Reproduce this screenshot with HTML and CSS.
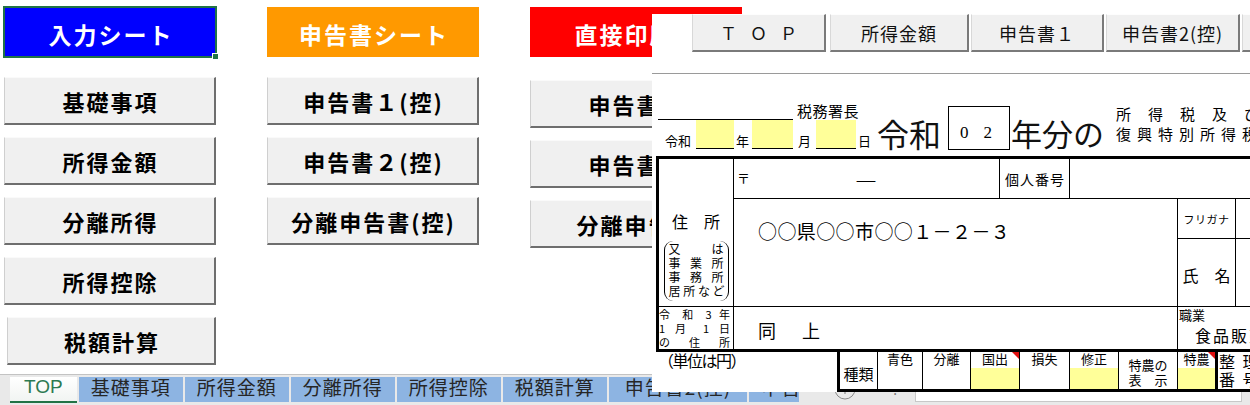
FILE: index.html
```html
<!DOCTYPE html>
<html lang="ja">
<head>
<meta charset="utf-8">
<title>TOP</title>
<link rel="stylesheet" href="styles.css">
</head>
<body>
<div class="sheet">
  <div class="col">
    <div class="hdr hdr-blue">入力シート<span class="handle"></span></div>
    <div class="btn">基礎事項</div>
    <div class="btn">所得金額</div>
    <div class="btn">分離所得</div>
    <div class="btn">所得控除</div>
    <div class="btn btn-shift">税額計算</div>
  </div>
  <div class="col">
    <div class="hdr hdr-orange">申告書シート</div>
    <div class="btn">申告書１(控)</div>
    <div class="btn">申告書２(控)</div>
    <div class="btn">分離申告書(控)</div>
  </div>
  <div class="col col3">
    <div class="hdr hdr-red">直接印刷用</div>
    <div class="btn">申告書１</div>
    <div class="btn">申告書２</div>
    <div class="btn">分離申告書</div>
  </div>
</div>

<div class="tabbar">
  <span class="tab tab-active">TOP</span>
  <span class="tab">基礎事項</span>
  <span class="tab">所得金額</span>
  <span class="tab">分離所得</span>
  <span class="tab">所得控除</span>
  <span class="tab">税額計算</span>
  <span class="tab tab-wide">申告書2(控)</span>
  <span class="tab tab-cut">申告書１</span>
  <span class="dots">⋯</span>
  <span class="addbtn"><svg width="22" height="22" viewBox="0 0 22 22"><circle cx="11" cy="11" r="10" fill="none" stroke="#8a8a8a" stroke-width="1"/><path d="M11 6v10M6 11h10" stroke="#8a8a8a" stroke-width="1.2"/></svg></span>
  <span class="sq"></span>
  <span class="vdots">⁝</span>
  <span class="hscroll"></span>
</div>

<div class="popup">
  <div class="pbtns">
    <div class="pbtn w-top"><span class="toptxt">ＴＯＰ</span></div>
    <div class="pbtn w-a">所得金額</div>
    <div class="pbtn w-b">申告書１</div>
    <div class="pbtn w-c">申告書2(控)</div>
    <div class="pbtn w-d"></div>
  </div>
  <div class="pline"></div>

  <div class="phead">
    <div class="dateblk">
      <div class="rowA"><span class="uline"></span><span class="zeimu">税務署長</span></div>
      <div class="rowB">
        <span class="dl dl-reiwa">令和</span>
        <span class="ybox yb1"></span>
        <span class="dl dl-nen">年</span>
        <span class="ybox yb2"></span>
        <span class="dl dl-tsuki">月</span>
        <span class="ybox yb3"></span>
        <span class="dl dl-hi">日</span>
      </div>
    </div>
    <div class="ttl ttl-reiwa">令和</div>
    <div class="yearbox">02</div>
    <div class="ttl ttl-nen">年分の</div>
    <div class="ttl2">
      <div class="t2a">所得税及び</div>
      <div class="t2b">復興特別所得税</div>
    </div>
  </div>

  <div class="ptable">
    <div class="cell lab1">
      <div class="jusho">住　所</div>
      <div class="brk">
        <div class="bl">又 は</div>
        <div class="bl">事 業 所</div>
        <div class="bl">事 務 所</div>
        <div class="bl">居 所 な ど</div>
      </div>
    </div>
    <div class="cell zip"><span class="yuubin">〒</span><span class="dash">―</span></div>
    <div class="cell kojin">個人番号</div>
    <div class="cell r1rest"></div>
    <div class="cell addr">○○県○○市○○１－２－３</div>
    <div class="cell furi">フリガナ</div>
    <div class="cell furi2"></div>
    <div class="cell shimei">氏　名</div>
    <div class="cell shimei2"></div>
    <div class="cell lab3">
      <div class="jl">令 和 3 年</div>
      <div class="jl">1 月 1 日</div>
      <div class="jl">の 住 所</div>
    </div>
    <div class="cell doujou">同<span class="gap"></span>上</div>
    <div class="cell shoku">
      <div class="sk1">職業</div>
      <div class="sk2">食品販売業</div>
    </div>
  </div>

  <div class="pbottom">
    <div class="unit">（単位は円）</div>
    <div class="kbox">
      <div class="kc k-shurui">種類</div>
      <div class="kc">青色</div>
      <div class="kc">分離</div>
      <div class="kc kc-y flag">国出</div>
      <div class="kc">損失</div>
      <div class="kc kc-y">修正</div>
      <div class="kc k-tokuno"><div>特農の</div><div>表　示</div></div>
      <div class="kc kc-y flag">特農</div>
      <div class="kc k-seiri"><div>整 理</div><div>番 号</div></div>
    </div>
  </div>
</div>
</body>
</html>
```

FILE: styles.css
```css
html, body {
  margin: 0;
  padding: 0;
}
body {
  width: 1250px;
  height: 405px;
  overflow: hidden;
  position: relative;
  background: #fff;
  font-family: "Noto Sans CJK JP", "Noto Sans", sans-serif;
  color: #000;
}

/* ---------- sheet with navigation buttons ---------- */
.sheet {
  height: 374px;
  box-sizing: border-box;
  padding: 7px 0 0 4px;
  display: flex;
  gap: 51px;
}
.col {
  width: 212px;
  display: flex;
  flex-direction: column;
  gap: 12px;
}
.hdr {
  height: 50px;
  margin-bottom: 8px;
  box-sizing: border-box;
  padding: 4px 0 0 2px;
  display: flex;
  align-items: center;
  justify-content: center;
  color: #fff;
  font-weight: 700;
  font-size: 23px;
  letter-spacing: 2px;
  position: relative;
}
.col3 .hdr {
  margin-bottom: 11px;
}
.hdr-blue {
  background: #0000ff;
  outline: 2px solid #217346;
  outline-offset: -1px;
}
.hdr-orange {
  background: #ff9900;
}
.hdr-red {
  background: #ff0000;
}
.handle {
  position: absolute;
  right: -3px;
  bottom: -3px;
  width: 5px;
  height: 5px;
  background: #217346;
  border: 1px solid #fff;
}
.btn {
  height: 48px;
  box-sizing: border-box;
  background: #f0f0f0;
  border-style: solid;
  border-width: 1px 2px 2px 1px;
  border-color: #fafafa #6e6e6e #6e6e6e #cfcfcf;
  display: flex;
  align-items: center;
  justify-content: center;
  padding-left: 2px;
  font-weight: 700;
  font-size: 22px;
  letter-spacing: 2px;
  white-space: nowrap;
}
.btn-shift {
  margin-left: 3px;
  width: 209px;
}

/* ---------- sheet tab bar ---------- */
.tabbar {
  height: 31px;
  box-sizing: border-box;
  border-top: 1px solid #c3c3c3;
  background: #e9e9e9;
  display: flex;
  align-items: flex-start;
  padding: 2px 0 0 10px;
}
.tab {
  height: 25px;
  box-sizing: border-box;
  line-height: 20px;
  padding: 0 12px;
  margin-right: 2px;
  background: #8db4e2;
  font-size: 19px;
  letter-spacing: 1px;
  color: #262626;
  white-space: nowrap;
  flex: none;
}
.tab-active {
  height: 26px;
  background: linear-gradient(#ffffff, #f1f4f2);
  border-bottom: 2px solid #217346;
  color: #2d7a52;
  font-family: "Liberation Sans", Arial, sans-serif;
  padding: 0 14px;
  letter-spacing: 0;
}
.tab-wide {
  padding: 0 16px;
}
.tab-cut {
  width: 50px;
  overflow: hidden;
  padding: 0 0 0 12px;
}
.dots {
  flex: none;
  width: 16px;
  color: #217346;
  font-size: 16px;
  line-height: 22px;
}
.addbtn {
  flex: none;
  margin-left: 17px;
  width: 22px;
  height: 22px;
  margin-top: 1px;
}
.addbtn svg {
  display: block;
}
.sq {
  flex: none;
  width: 3px;
  height: 3px;
  background: #9a9a9a;
  margin: 11px 0 0 19px;
}
.vdots {
  flex: none;
  margin-left: 15px;
  width: 8px;
  color: #777;
  font-size: 14px;
  line-height: 24px;
}
.hscroll {
  flex: none;
  width: 327px;
  margin-left: 14px;
  height: 25px;
  box-sizing: border-box;
  background: #fff;
  border: 1px solid #c8c8c8;
}

/* ---------- pasted form window ---------- */
.popup {
  position: absolute;
  left: 652px;
  top: 14px;
  width: 598px;
  height: 378px;
  background: #fff;
  overflow: hidden;
  display: flex;
  flex-direction: column;
}
.pbtns {
  display: flex;
  height: 38px;
  flex: none;
  padding-left: 40px;
}
.pbtn {
  flex: none;
  height: 38px;
  box-sizing: border-box;
  background: #f0f0f0;
  border-style: solid;
  border-width: 1px 2px 2px 1px;
  border-color: #fdfdfd #7a7a7a #7a7a7a #d8d8d8;
  display: flex;
  align-items: center;
  justify-content: center;
  font-size: 18px;
  letter-spacing: 1px;
  color: #111;
  white-space: nowrap;
}
.w-top { width: 134px; margin-right: 4px; }
.w-a { width: 139px; margin-right: 2px; }
.w-b { width: 133px; margin-right: 2px; }
.w-c { width: 134px; margin-right: 2px; }
.w-d { width: 60px; }
.toptxt {
  font-size: 17px;
  letter-spacing: 13px;
  padding-left: 13px;
}
.pline {
  flex: none;
  margin-top: 21px;
  height: 1px;
  background: #9a9a9a;
}

.phead {
  flex: none;
  height: 82px;
  display: flex;
  align-items: flex-end;
}
.dateblk {
  flex: none;
  margin-left: 6px;
  width: 213px;
  margin-bottom: 7px;
}
.rowA {
  display: flex;
  align-items: flex-end;
}
.uline {
  width: 135px;
  height: 1px;
  background: #000;
}
.zeimu {
  margin-left: 4px;
  font-size: 15px;
  line-height: 18px;
  letter-spacing: 0.5px;
}
.rowB {
  display: flex;
  align-items: flex-end;
  height: 29px;
  font-size: 13px;
  line-height: 16px;
}
.dl { flex: none; }
.dl-reiwa { margin-left: 7px; }
.dl-nen { margin-left: 2px; }
.dl-tsuki { margin-left: 5px; }
.dl-hi { margin-left: 2px; }
.ybox {
  flex: none;
  height: 29px;
  box-sizing: border-box;
  background: #ffff99;
  border-bottom: 1px solid #000;
}
.yb1 { width: 38px; margin-left: 5px; }
.yb2 { width: 41px; margin-left: 3px; }
.yb3 { width: 40px; margin-left: 5px; }

.ttl {
  flex: none;
  line-height: 34px;
  margin-bottom: 6px;
  color: #111;
}
.ttl-reiwa {
  margin-left: 6px;
  font-size: 32px;
}
.ttl-nen {
  margin-left: 1px;
  font-size: 31px;
}
.yearbox {
  flex: none;
  margin-left: 7px;
  margin-bottom: 6px;
  width: 62px;
  height: 44px;
  box-sizing: border-box;
  border: 1px solid #000;
  display: flex;
  align-items: center;
  padding: 10px 0 0 11px;
  font-family: "Liberation Serif", serif;
  font-size: 17px;
  letter-spacing: 15px;
}
.ttl2 {
  flex: none;
  margin-left: 12px;
  margin-bottom: 12px;
  font-size: 15px;
  line-height: 20px;
  white-space: nowrap;
}
.t2a { letter-spacing: 17px; }
.t2b { letter-spacing: 6px; }

/* form table */
.ptable {
  flex: none;
  margin-left: 4px;
  display: grid;
  grid-template-columns: 74px 265px 69px 107px 57px 100px;
  grid-template-rows: 39px 39px 67px 42px;
  gap: 1px;
  background: #000;
  border-top: 3px solid #000;
  border-left: 3px solid #000;
  border-bottom: 3px solid #000;
  width: max-content;
}
.cell {
  background: #fff;
  min-width: 0;
}
.lab1 {
  grid-row: 1 / 4;
  grid-column: 1;
  display: flex;
  flex-direction: column;
  align-items: center;
  padding-top: 52px;
  box-sizing: border-box;
}
.jusho {
  font-size: 16px;
  line-height: 20px;
}
.brk {
  margin-top: 10px;
  width: 65px;
  height: 60px;
  box-sizing: border-box;
  border-left: 1px solid #000;
  border-right: 1px solid #000;
  border-radius: 9px;
  padding: 1px 4px 0 4px;
  font-size: 12px;
  line-height: 14px;
}
.bl,
.jl {
  text-align: justify;
  text-align-last: justify;
  white-space: nowrap;
}
.zip {
  grid-row: 1;
  grid-column: 2;
  display: flex;
  align-items: center;
  font-size: 13px;
}
.yuubin {
  margin-left: 3px;
  margin-top: -2px;
}
.dash {
  margin-left: 105px;
  font-size: 22px;
  line-height: 22px;
}
.kojin {
  grid-row: 1;
  grid-column: 3;
  display: flex;
  align-items: center;
  justify-content: center;
  font-size: 14px;
  letter-spacing: 1px;
  padding-left: 1px;
}
.r1rest {
  grid-row: 1;
  grid-column: 4 / 7;
}
.addr {
  grid-row: 2 / 4;
  grid-column: 2 / 5;
  padding: 20px 0 0 24px;
  font-size: 19px;
  line-height: 24px;
  letter-spacing: 0.4px;
  white-space: nowrap;
}
.furi {
  grid-row: 2;
  grid-column: 5;
  display: flex;
  align-items: center;
  justify-content: center;
  font-size: 11px;
  letter-spacing: 0.5px;
}
.furi2 { grid-row: 2; grid-column: 6; }
.shimei {
  grid-row: 3;
  grid-column: 5;
  display: flex;
  align-items: center;
  justify-content: center;
  padding-top: 4px;
  box-sizing: border-box;
  font-size: 16px;
}
.shimei2 { grid-row: 3; grid-column: 6; }
.lab3 {
  grid-row: 4;
  grid-column: 1;
  padding: 0 3px 0 0;
  font-size: 11px;
  line-height: 14px;
}
.doujou {
  grid-row: 4;
  grid-column: 2 / 5;
  display: flex;
  align-items: center;
  padding: 4px 0 0 24px;
  box-sizing: border-box;
  font-size: 18px;
}
.gap {
  display: inline-block;
  width: 26px;
}
.shoku {
  grid-row: 4;
  grid-column: 5 / 7;
  padding-left: 1px;
}
.sk1 {
  font-size: 13px;
  line-height: 14px;
  margin-top: 1px;
}
.sk2 {
  margin-left: 16px;
  margin-top: 3px;
  font-size: 16px;
  line-height: 20px;
  letter-spacing: 2px;
  white-space: nowrap;
}

/* bottom area */
.pbottom {
  flex: none;
  height: 40px;
  display: flex;
}
.unit {
  flex: none;
  width: 185px;
  box-sizing: border-box;
  padding-left: 6px;
  font-size: 16px;
  line-height: 17px;
  margin-top: 0;
  letter-spacing: -1.5px;
}
.kbox {
  flex: none;
  display: grid;
  grid-template-columns: 37px 44px 47px 48px 49px 48px 58px 37px 62px;
  grid-template-rows: 37px;
  gap: 1px;
  background: #000;
  border-left: 3px solid #000;
  border-bottom: 3px solid #000;
}
.kc {
  background: #fff;
  position: relative;
  font-size: 13px;
  line-height: 14px;
  text-align: center;
  white-space: nowrap;
}
.kc-y {
  background: linear-gradient(#fff 0, #fff 16px, #ffff99 16px);
}
.flag::after {
  content: "";
  position: absolute;
  top: 0;
  right: 0;
  border-top: 7px solid #e01010;
  border-left: 7px solid transparent;
}
.k-shurui {
  font-size: 15px;
  line-height: 16px;
  padding-top: 14px;
  box-sizing: border-box;
}
.k-tokuno {
  padding-top: 5px;
  box-sizing: border-box;
  line-height: 15px;
}
.k-seiri {
  margin-left: 2px;
  text-align: left;
  padding-left: 1px;
  font-size: 16px;
  line-height: 18px;
  letter-spacing: 2px;
}
```
